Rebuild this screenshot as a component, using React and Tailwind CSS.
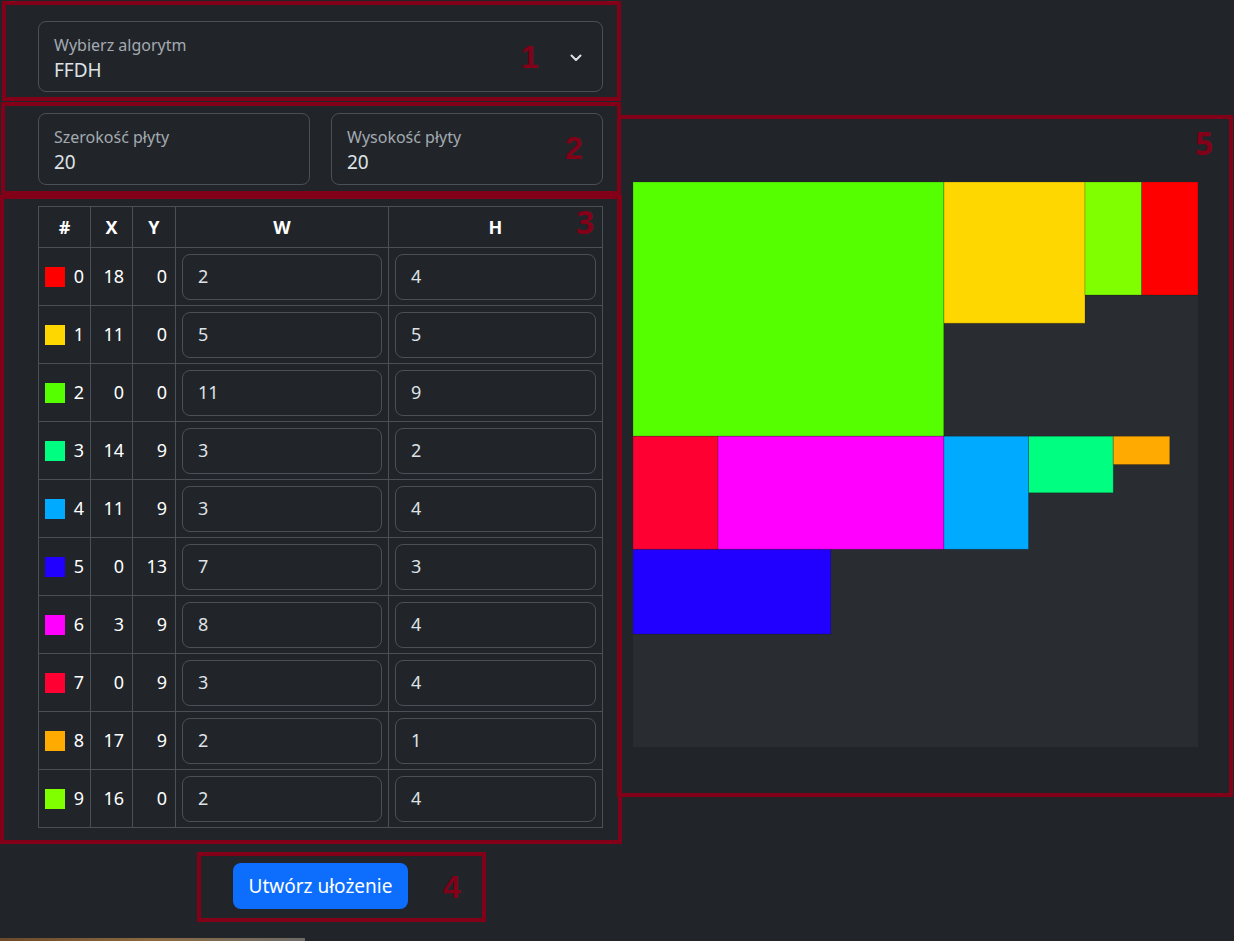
import React from "react";

const items = [
  { id: 0, x: 18, y: 0, w: 2, h: 4, color: "#ff0000" },
  { id: 1, x: 11, y: 0, w: 5, h: 5, color: "#ffd700" },
  { id: 2, x: 0, y: 0, w: 11, h: 9, color: "#55ff00" },
  { id: 3, x: 14, y: 9, w: 3, h: 2, color: "#00ff80" },
  { id: 4, x: 11, y: 9, w: 3, h: 4, color: "#00aaff" },
  { id: 5, x: 0, y: 13, w: 7, h: 3, color: "#2200ff" },
  { id: 6, x: 3, y: 9, w: 8, h: 4, color: "#ff00ff" },
  { id: 7, x: 0, y: 9, w: 3, h: 4, color: "#ff0033" },
  { id: 8, x: 17, y: 9, w: 2, h: 1, color: "#ffaa00" },
  { id: 9, x: 16, y: 0, w: 2, h: 4, color: "#80ff00" },
];

const font = { fontFamily: '"Noto Sans", "Open Sans", sans-serif' };
const arial = { fontFamily: '"Liberation Sans", Arial, sans-serif' };

function Field({ label, value, className }) {
  return (
    <div
      className={
        "h-[72px] rounded-lg border border-[#495057] bg-[#212529] px-[15px] pt-[13px] " +
        className
      }
    >
      <div className="text-[16px] leading-[20px] text-[#a3aab1]">{label}</div>
      <div className="mt-[2px] text-[19px] leading-[26px] text-[#dee2e6]">{value}</div>
    </div>
  );
}

function Plan() {
  const s = 565 / 20;
  return (
    <svg width="565" height="565" viewBox="0 0 565 565" className="block">
      <rect x="0" y="0" width="565" height="565" fill="#292d31" />
      {items.map((it) => (
        <rect
          key={it.id}
          x={it.x * s}
          y={it.y * s}
          width={it.w * s}
          height={it.h * s}
          fill={it.color}
          stroke="rgba(0,0,0,0.2)"
          strokeWidth="1"
        />
      ))}
    </svg>
  );
}

export default function App() {
  return (
    <div className="relative min-h-[941px] w-full bg-[#212529] text-[#dee2e6]" style={font}>
      <div className="flex">
        {/* lewa kolumna */}
        <div className="w-[603px] shrink-0 pl-[38px] pt-[21px]">
          <div className="relative h-[71px] rounded-lg border border-[#495057] px-[15px] pt-[13px]">
            <div className="text-[16px] leading-[20px] text-[#a3aab1]">Wybierz algorytm</div>
            <div className="mt-[2px] text-[19px] leading-[26px] text-[#dee2e6]">FFDH</div>
            <svg
              className="absolute right-[19px] top-[31px]"
              width="14"
              height="10"
              viewBox="0 0 14 10"
            >
              <polyline points="2.5,2.5 7,7 11.5,2.5" fill="none" stroke="#dee2e6" strokeWidth="2" strokeLinecap="round" strokeLinejoin="round" />
            </svg>
          </div>

          <div className="mt-[21px] flex gap-[21px]">
            <Field label="Szerokość płyty" value="20" className="w-[272px]" />
            <Field label="Wysokość płyty" value="20" className="w-[272px]" />
          </div>

          <table className="mt-[21px] w-[565px] border-collapse text-[18px]">
            <thead>
              <tr className="h-[41px]">
                <th className="w-[52px] border border-[#495057] text-center font-bold text-white">#</th>
                <th className="w-[42px] border border-[#495057] text-center font-bold text-white">X</th>
                <th className="w-[43px] border border-[#495057] text-center font-bold text-white">Y</th>
                <th className="w-[213px] border border-[#495057] text-center font-bold text-white">W</th>
                <th className="border border-[#495057] text-center font-bold text-white">H</th>
              </tr>
            </thead>
            <tbody>
              {items.map((it) => (
                <tr key={it.id} className="h-[58px]">
                  <td className="border border-[#495057] px-[6px]">
                    <div className="flex items-center justify-between">
                      <span className="block h-[20px] w-[20px]" style={{ backgroundColor: it.color }} />
                      <span className="text-white">{it.id}</span>
                    </div>
                  </td>
                  <td className="border border-[#495057] px-[8px] text-right text-white">{it.x}</td>
                  <td className="border border-[#495057] px-[8px] text-right text-white">{it.y}</td>
                  <td className="border border-[#495057] px-[6px]">
                    <div className="flex h-[46px] items-center rounded-lg border border-[#495057] px-[15px] text-[#dee2e6]">
                      {it.w}
                    </div>
                  </td>
                  <td className="border border-[#495057] px-[6px]">
                    <div className="flex h-[46px] items-center rounded-lg border border-[#495057] px-[15px] text-[#dee2e6]">
                      {it.h}
                    </div>
                  </td>
                </tr>
              ))}
            </tbody>
          </table>

          <div className="mt-[35px] flex justify-center">
            <button className="h-[46px] rounded-lg bg-[#0d6efd] px-[16px] text-[19px] text-white">
              Utwórz ułożenie
            </button>
          </div>
        </div>

        {/* prawa kolumna */}
        <div className="ml-[30px] pt-[182px]">
          <Plan />
        </div>
      </div>

      {/* adnotacje */}
      <div className="pointer-events-none absolute left-[2px] top-[1px] h-[100px] w-[619px] border-4 border-[#820018]" />
      <div className="pointer-events-none absolute left-[1px] top-[102px] h-[93px] w-[620px] border-4 border-[#820018]" />
      <div className="pointer-events-none absolute left-0 top-[195px] h-[649px] w-[622px] border-4 border-[#820018]" />
      <div className="pointer-events-none absolute left-[197px] top-[852px] h-[70px] w-[289px] border-4 border-[#820018]" />
      <div className="pointer-events-none absolute left-[617px] top-[115px] h-[682px] w-[616px] border-4 border-[#820018]" />

      <span className="absolute left-[521px] top-[38px] text-[32px] font-bold leading-[38px] text-[#820018]" style={arial}>1</span>
      <span className="absolute left-[565px] top-[129px] text-[32px] font-bold leading-[38px] text-[#820018]" style={arial}>2</span>
      <span className="absolute left-[576px] top-[203px] text-[32px] font-bold leading-[38px] text-[#820018]">3</span>
      <span className="absolute left-[443px] top-[868px] text-[32px] font-bold leading-[38px] text-[#820018]" style={arial}>4</span>
      <span className="absolute left-[1195px] top-[124px] text-[32px] font-bold leading-[38px] text-[#820018]">5</span>

      <div className="absolute bottom-0 left-0 h-[3px] w-[305px] bg-gradient-to-r from-[#6b4a2a] via-[#8a6a40] to-[#6d6a66]" />
    </div>
  );
}
